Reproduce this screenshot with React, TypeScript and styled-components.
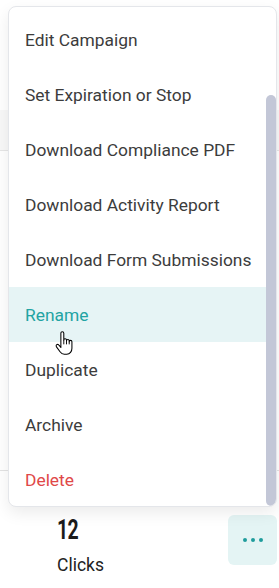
import styled, { createGlobalStyle } from 'styled-components';

const GlobalStyle = createGlobalStyle`
  html, body {
    margin: 0;
    padding: 0;
    background: #ffffff;
    font-family: Roboto, "Noto Sans", Arial, sans-serif;
  }
`;

const Page = styled.div`
  position: relative;
  width: 279px;
  height: 588px;
  overflow: hidden;
  background: #fff;
`;

const TopRow = styled.div`
  height: 110px;
`;

const HeaderRow = styled.div`
  height: 40px;
  background: #f8f8f8;
  border-bottom: 1px solid #e6e6e6;
`;

const BodyRow = styled.div`
  height: 319px;
  border-bottom: 1px solid #e3e3e3;
`;

const StatsRow = styled.div`
  display: flex;
  justify-content: space-between;
  align-items: flex-start;
  padding: 44px 2px 0 57px;
`;

const Stat = styled.div`
  display: flex;
  flex-direction: column;
  gap: 9px;
`;

const StatValue = styled.span`
  display: inline-block;
  font-family: Roboto, sans-serif;
  font-weight: 700;
  font-size: 27px;
  line-height: 30px;
  color: #1b1b1b;
  letter-spacing: -1px;
  transform: scaleX(0.72);
  transform-origin: left center;
`;

const StatLabel = styled.span`
  font-size: 17.5px;
  line-height: 22px;
  color: #222;
`;

const MoreButton = styled.button`
  width: 49px;
  height: 50px;
  border: none;
  border-radius: 6px;
  background: #e4f4f4;
  display: flex;
  align-items: center;
  justify-content: center;
  gap: 4px;
  padding: 0;
`;

const Dot = styled.span`
  width: 4px;
  height: 4px;
  border-radius: 50%;
  background: #1f9c9c;
`;

const Menu = styled.div`
  position: absolute;
  left: 8px;
  top: 6px;
  width: 269px;
  height: 501px;
  box-sizing: border-box;
  border: 1px solid #e4e6ea;
  border-radius: 8px;
  background: #fff;
  box-shadow: 0 6px 16px rgba(0, 0, 0, 0.08);
  overflow: hidden;
`;

const MenuList = styled.ul`
  list-style: none;
  margin: 0;
  padding: 5px 0 0;
`;

const MenuItem = styled.li<{ $tone?: 'active' | 'danger' }>`
  height: 55px;
  display: flex;
  align-items: center;
  padding-left: 16px;
  font-size: 17.4px;
  color: ${p => (p.$tone === 'active' ? '#22a3a3' : p.$tone === 'danger' ? '#e04848' : '#3c3c3c')};
  background: ${p => (p.$tone === 'active' ? '#e6f4f5' : 'transparent')};
  white-space: nowrap;
`;

const ScrollThumb = styled.div`
  position: absolute;
  right: 0;
  top: 88px;
  bottom: 0;
  width: 10px;
  border-radius: 5px;
  background: #c3c7d7;
`;

const Cursor = styled.svg`
  position: absolute;
  left: 55px;
  top: 331px;
`;

const items: { label: string; tone?: 'active' | 'danger' }[] = [
  { label: 'Edit Campaign' },
  { label: 'Set Expiration or Stop' },
  { label: 'Download Compliance PDF' },
  { label: 'Download Activity Report' },
  { label: 'Download Form Submissions' },
  { label: 'Rename', tone: 'active' },
  { label: 'Duplicate' },
  { label: 'Archive' },
  { label: 'Delete', tone: 'danger' },
];

export default function App() {
  return (
    <Page>
      <GlobalStyle />
      <TopRow />
      <HeaderRow />
      <BodyRow />
      <StatsRow>
        <Stat>
          <StatValue>12</StatValue>
          <StatLabel>Clicks</StatLabel>
        </Stat>
        <MoreButton aria-label="More actions">
          <Dot />
          <Dot />
          <Dot />
        </MoreButton>
      </StatsRow>

      <Menu>
        <MenuList>
          {items.map(item => (
            <MenuItem key={item.label} $tone={item.tone}>
              {item.label}
            </MenuItem>
          ))}
        </MenuList>
        <ScrollThumb />
      </Menu>

      <Cursor width="18" height="24" viewBox="0 0 17 23">
        <path
          d="M5.5 2.2C5.5 1.3 6.1 0.7 6.9 0.7C7.7 0.7 8.3 1.3 8.3 2.2V8.6C8.3 7.9 8.9 7.4 9.6 7.4C10.3 7.4 10.9 7.9 10.9 8.6V9.4C10.9 8.7 11.5 8.2 12.2 8.2C12.9 8.2 13.5 8.7 13.5 9.4V10.2C13.5 9.5 14.1 9 14.8 9C15.5 9 16.1 9.5 16.1 10.2V16.5C16.1 19.5 14.2 22.3 11.2 22.3H8.8C6.9 22.3 5.8 21.4 4.7 19.9L1.3 15.2C0.8 14.5 0.9 13.6 1.6 13.1C2.3 12.6 3.2 12.8 3.7 13.5L5.5 15.8Z"
          fill="#fff"
          stroke="#000"
          strokeWidth="1"
          strokeLinejoin="round"
        />
        <path d="M8.3 8.6V12.8M10.9 9.4V12.8M13.5 10.2V12.8" stroke="#000" strokeWidth="0.9" />
      </Cursor>
    </Page>
  );
}
